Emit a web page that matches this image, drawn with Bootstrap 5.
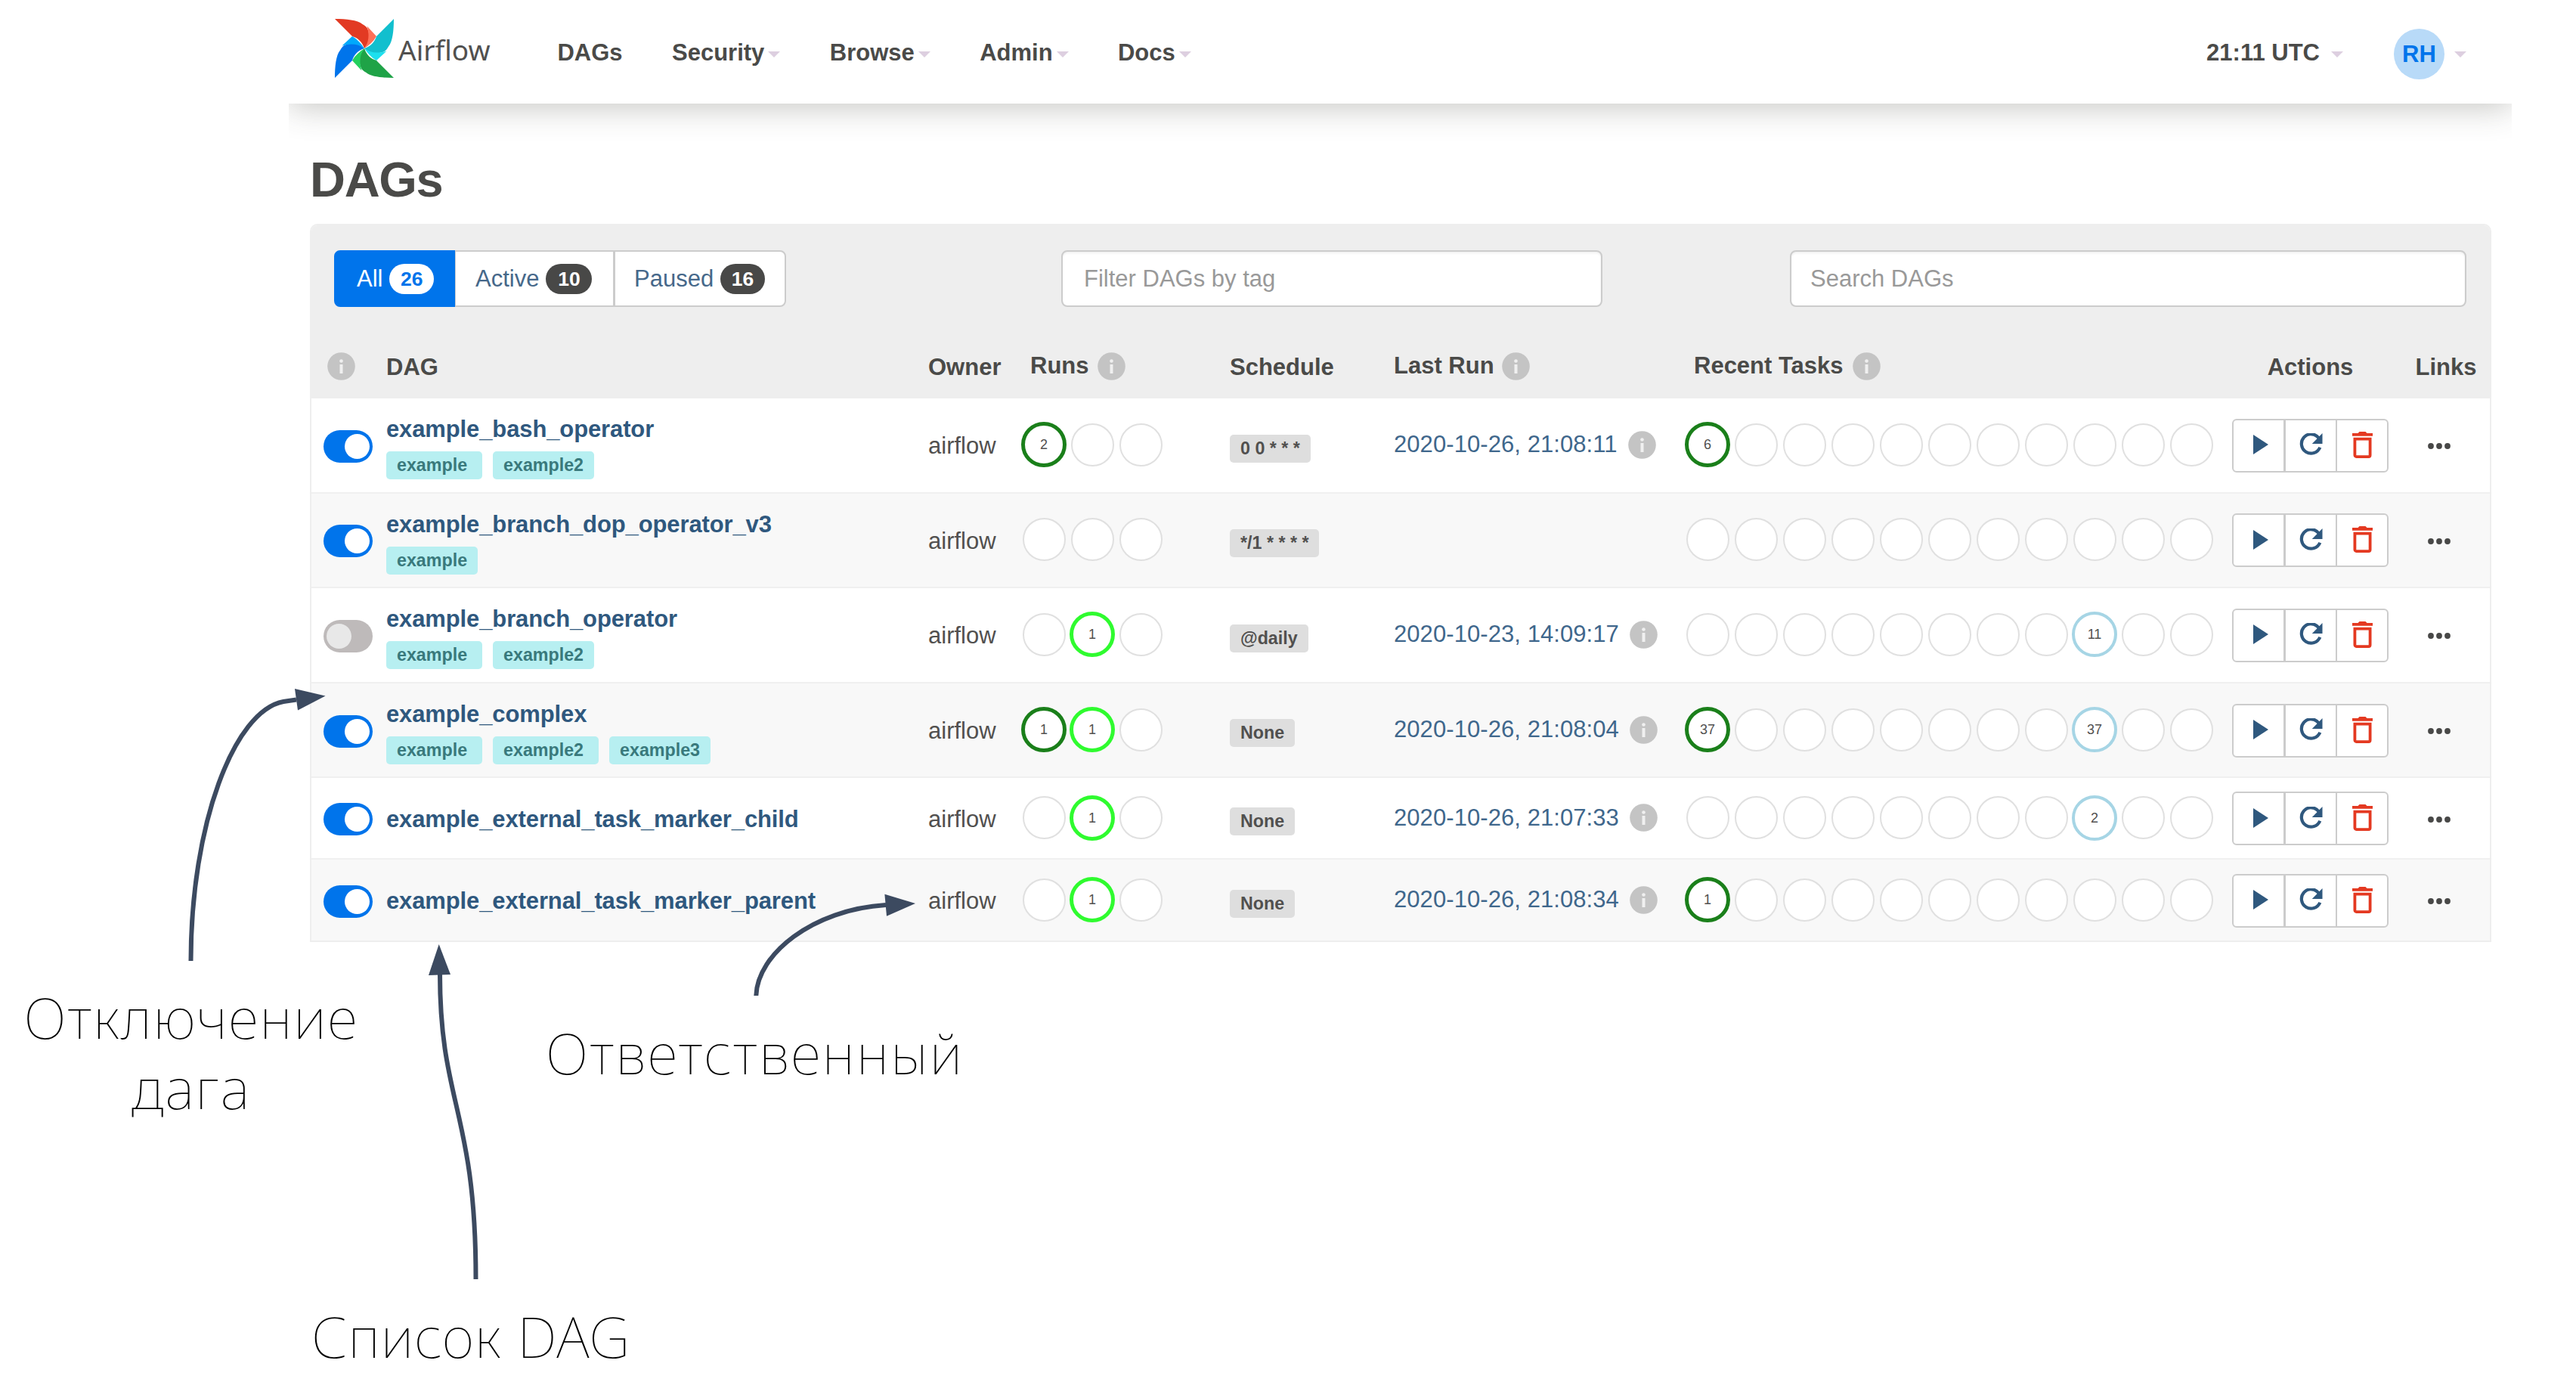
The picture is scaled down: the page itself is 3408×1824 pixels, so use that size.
<!DOCTYPE html>
<html lang="ru">
<head>
<meta charset="utf-8">
<title>Airflow – DAGs</title>
<link href="https://cdn.jsdelivr.net/npm/bootstrap@5.3.0/dist/css/bootstrap.min.css" rel="stylesheet">
<style>
body{font-family:"Liberation Sans",Arial,sans-serif;font-size:31px;line-height:44px;color:#51504f;background:#fff}
.sheet{width:3408px;height:1824px}
.app{margin-left:382px;width:2941px;height:1260px}
.topbar{height:137px;padding:0 60px;box-shadow:0 4px 40px rgba(60,60,50,.3);font-weight:700;color:#4a4a48;z-index:1}
.brand{font:400 37px/44px "Noto Sans","Open Sans",sans-serif;color:#51504f;margin:-6px 0 0 5px}
.menu-item{padding:2px 0 0;white-space:nowrap}
.caret{width:0;height:0;border:8.5px solid transparent;border-top-color:#ddcfe0;border-bottom:0;margin-left:5px;margin-top:4px}
.avatar{width:67px;height:67px;background:#b8daf8;color:#0074eb;margin-top:6px}
.page-title{font-size:65px;line-height:80px;letter-spacing:-1.3px;font-weight:700;color:#4a4a48;margin:61px 0 0 28px}
.panel{margin:18px 0 0 28px;width:2886px;border:2px solid #eee;border-radius:10px 10px 0 0}
.toolbar{background:#eee;height:147px;padding:33px 31px 0 30px;border-radius:8px 8px 0 0}
.filters .btn{height:75px;border:2px solid #ccc;background:#fff;color:#46688a;font-size:31px;line-height:44px;border-radius:8px;padding:0 26px;display:flex;align-items:center;gap:9px}
.filters .btn.active{background:#0074eb;border-color:#0074eb;color:#fff}
.filters .count{font-size:26.5px;line-height:41px;width:61px;height:40px;border-radius:20px;padding:0;background:#484847;color:#fff;display:block;top:0}
.filters .active .count{background:#fff;color:#0074eb}
.field{height:75px;border:2px solid #ccc;border-radius:8px;font-size:31px;padding:1px 28px 0;color:#555;box-shadow:inset 0 2px 3px rgba(0,0,0,.06)}
.field::placeholder{color:#999;opacity:1}
.dags{table-layout:fixed;border-collapse:separate;border-spacing:0;width:2882px;margin:0;color:#51504f}
.dags th,.dags td{padding:0;vertical-align:middle;border:0;background:transparent;box-shadow:none;color:inherit;white-space:nowrap}
.dags th{height:82px;background:#eee;color:#4a4a48;font-weight:700}
.dags td{height:125.6px;border-bottom:2px solid #f0f0f0;padding-top:3px}
.dags tr.short td{height:108px}
.dags tbody tr:nth-child(even) td{background:#f8f8f8}
.dags tbody tr:last-child td{border-bottom:0;height:107px}
.dags .raised{padding-bottom:4px}
.dags .acts-cell{padding-bottom:2px}
.dot-i{width:37px;height:37px;display:block;fill:#c4c4c4}
.name{color:#2f587e;font-weight:700;line-height:44px;letter-spacing:-.12px}
.tagrow{gap:14px;margin-top:7px}
.tag{background:#b7eff1;color:#39797c;font-weight:700;font-size:23.25px;line-height:37px;height:37px;border-radius:5px;padding:0 20px 0 14px}
.tag:last-child{padding-right:14px}
.sched{display:inline-block;vertical-align:middle;background:#dedede;color:#51504f;font-weight:700;font-size:23.25px;line-height:37px;height:37px;border-radius:5px;padding:0 14px;margin-top:2px}
.run-date{color:#3f678c;letter-spacing:.07px}
.rings{gap:4px}
.ring{width:60px;height:60px;padding:1.5px}
.ring span{display:flex;align-items:center;justify-content:center;width:100%;height:100%;border-radius:50%;border:2.5px solid #e0e0e0;background:#fff;font-size:18px;line-height:20px}
.ring.on{padding:0}
.ring.on span{border-width:5px}
.ring.success span{border-color:#1a7f1a}
.ring.running span{border-color:#2ffb2f}
.ring.none span{border-color:#a6d5e5;border-width:4px}
.acts .btn{width:70px;height:71px;border:2px solid #ccc;background:#fff;border-radius:6px;padding:0 0 2px 1px;display:flex;align-items:center;justify-content:center}
.acts .btn:first-child{padding-left:6px}
.acts .btn + .btn{margin-left:-1.500px!important}
.toggle-sw{width:65px;height:43px;border-radius:22px;background:#0074eb;padding:5px 4px;margin-left:16px;display:flex;justify-content:flex-end}
.toggle-sw i{width:33px;height:33px;border-radius:50%;background:#fff}
.toggle-sw.off{background:#bebaba;justify-content:flex-start}
.toggle-sw.off i{background:#e8e8e8}
.note{position:absolute;font-family:"Noto Sans",Roboto,sans-serif;font-weight:130;font-size:75px;line-height:93px;letter-spacing:1.8px;color:#000;white-space:nowrap;text-align:center}
.arrows{position:absolute;left:0;top:0;z-index:2}
</style>
<script src="https://cdn.jsdelivr.net/npm/bootstrap@5.3.0/dist/js/bootstrap.bundle.min.js"></script>
</head>
<body>
<svg width="0" height="0" class="position-absolute">
  <symbol id="info" viewBox="0 0 37 37"><circle cx="18.5" cy="18.5" r="18.3"/><g fill="#fff" fill-opacity=".75"><circle cx="18.5" cy="11.5" r="2.3"/><rect x="16.5" y="16" width="4" height="12"/></g></symbol>
  <symbol id="play" viewBox="0 0 20 26"><path fill="#2f587e" d="M0 0v26l20-13z"/></symbol>
  <symbol id="reload" viewBox="0 0 31 30"><path fill="none" stroke="#2f587e" stroke-width="4.2" d="M25.6 6.2A12.7 12.7 0 1 0 27.3 18.8"/><path fill="#2f587e" d="M30.5 0v14H16.8z"/></symbol>
  <symbol id="trash" viewBox="0 0 27 35"><path fill="#e43921" d="M0 2h7.500l2-2h8l2 2H27v3.800H0z"/><path fill="none" stroke="#e43921" stroke-width="3.8" d="M3.400 9.600h20.200v21.500a2 2 0 0 1-2 2H5.400a2 2 0 0 1-2-2z"/></symbol>
  <symbol id="dots" viewBox="0 0 30 8"><g fill="#484847"><circle cx="4" cy="4" r="3.9"/><circle cx="15" cy="4" r="3.9"/><circle cx="26" cy="4" r="3.9"/></g></symbol>
</svg>
<div class="sheet position-relative overflow-hidden">
  <div class="app overflow-hidden">
    <nav class="topbar d-flex align-items-center bg-white position-relative">
      <svg width="80" height="80" viewBox="0 0 80 80" style="margin-top:-9px">
        <g><path fill="#e23a23" d="M1 1C16 1 31 2.500 37.500 8C41 10 44 12 45 16C48 25 46 33 40 40C37 31 31 26 24 24Z"/><path fill="#ff7057" d="M43.500 10.500L56 24C52 31 46 36 40 40C46 32 47 22 43.500 10.500Z"/></g>
        <g transform="rotate(90 40 40)"><path fill="#12bfce" d="M1 1C16 1 31 2.500 37.500 8C41 10 44 12 45 16C48 25 46 33 40 40C37 31 31 26 24 24Z"/><path fill="#1ce0ee" d="M43.500 10.500L56 24C52 31 46 36 40 40C46 32 47 22 43.500 10.500Z"/></g>
        <g transform="rotate(180 40 40)"><path fill="#1fa347" d="M1 1C16 1 31 2.500 37.500 8C41 10 44 12 45 16C48 25 46 33 40 40C37 31 31 26 24 24Z"/><path fill="#24d05e" d="M43.500 10.500L56 24C52 31 46 36 40 40C46 32 47 22 43.500 10.500Z"/></g>
        <g transform="rotate(270 40 40)"><path fill="#0074eb" d="M1 1C16 1 31 2.500 37.500 8C41 10 44 12 45 16C48 25 46 33 40 40C37 31 31 26 24 24Z"/><path fill="#00a9fb" d="M43.500 10.500L56 24C52 31 46 36 40 40C46 32 47 22 43.500 10.500Z"/></g>
      </svg>
      <span class="brand">Airflow</span>
      <div class="d-flex" style="margin-left:89px;gap:65.4px">
        <span class="menu-item">DAGs</span>
        <span class="menu-item d-flex align-items-center">Security<i class="caret"></i></span>
        <span class="menu-item d-flex align-items-center">Browse<i class="caret"></i></span>
        <span class="menu-item d-flex align-items-center">Admin<i class="caret"></i></span>
        <span class="menu-item d-flex align-items-center">Docs<i class="caret"></i></span>
      </div>
      <span class="menu-item d-flex align-items-center ms-auto">21:11 UTC<i class="caret" style="margin-left:15px"></i></span>
      <span class="avatar rounded-circle d-flex align-items-center justify-content-center" style="margin-left:67px">RH</span>
      <i class="caret" style="margin-left:13px;margin-top:7px"></i>
    </nav>
    <h1 class="page-title">DAGs</h1>
    <section class="panel">
      <div class="toolbar d-flex">
        <div class="btn-group filters">
          <a class="btn active" style="width:160px;padding-left:28px">All <span class="count badge">26</span></a>
          <a class="btn" style="width:212px">Active <span class="count badge">10</span></a>
          <a class="btn" style="width:228px;padding-left:25px">Paused <span class="count badge">16</span></a>
        </div>
        <input class="form-control field" style="width:716px;margin-left:auto" placeholder="Filter DAGs by tag">
        <input class="form-control field" style="width:895px;margin-left:248px;padding-left:25px" placeholder="Search DAGs">
      </div>
      <table class="table dags">
        <colgroup><col style="width:99px"><col style="width:717px"><col style="width:123px"><col style="width:276px"><col style="width:217px"><col style="width:385px"><col style="width:724px"><col style="width:207px"><col style="width:134px"></colgroup>
        <thead><tr>
          <th class="raised"><svg class="dot-i" style="margin-left:21px"><use href="#info"/></svg></th>
          <th>DAG</th>
          <th>Owner</th>
          <th class="raised"><div class="d-flex align-items-center" style="gap:11px;padding-left:12px">Runs <svg class="dot-i"><use href="#info"/></svg></div></th>
          <th>Schedule</th>
          <th class="raised"><div class="d-flex align-items-center" style="gap:10px">Last Run <svg class="dot-i"><use href="#info"/></svg></div></th>
          <th class="raised"><div class="d-flex align-items-center" style="gap:12px;padding-left:12px">Recent Tasks <svg class="dot-i"><use href="#info"/></svg></div></th>
          <th class="text-center">Actions</th>
          <th class="text-center" style="padding-left:18px">Links</th>
        </tr></thead>
        <tbody id="rows"></tbody>
      </table>
    </section>
  </div>

  <svg class="arrows" width="3408" height="1824" viewBox="0 0 3408 1824">
    <g fill="none" stroke="#3c4a60" stroke-width="6">
      <path d="M252.500 1271C252.500 1090 310 940 375 928L392 925.500"/>
      <path d="M629.500 1692C629.500 1470 582 1460 582 1288"/>
      <path d="M1000.300 1317C1002 1262 1075 1203 1172 1197"/>
    </g>
    <g fill="#3c4a60">
      <path d="M430.500 920.500L390 911L394 939.500Z"/>
      <path d="M580.700 1249L567 1290L596 1289Z"/>
      <path d="M1211 1195L1170.400 1182.700L1173 1211.700Z"/>
    </g>
  </svg>
  <div class="note" style="left:30px;top:1299px;width:446px">Отключение<br>дага</div>
  <div class="note" style="left:722px;top:1346px;letter-spacing:2.3px">Ответственный</div>
  <div class="note" style="left:412px;top:1721px;letter-spacing:1.2px">Список DAG</div>
</div>
<script>
// name, tags, enabled, {run slot: [class, count]}, schedule, last run, {task slot: [class, count]}
const dags = [
  ["example_bash_operator", ["example","example2"], 1, {0:["success",2]}, "0 0 * * *", "2020-10-26, 21:08:11", {0:["success",6]}],
  ["example_branch_dop_operator_v3", ["example"], 1, {}, "*/1 * * * *", "", {}],
  ["example_branch_operator", ["example","example2"], 0, {1:["running",1]}, "@daily", "2020-10-23, 14:09:17", {8:["none",11]}],
  ["example_complex", ["example","example2","example3"], 1, {0:["success",1],1:["running",1]}, "None", "2020-10-26, 21:08:04", {0:["success",37],8:["none",37]}],
  ["example_external_task_marker_child", [], 1, {1:["running",1]}, "None", "2020-10-26, 21:07:33", {8:["none",2]}],
  ["example_external_task_marker_parent", [], 1, {1:["running",1]}, "None", "2020-10-26, 21:08:34", {0:["success",1]}]
];
const rings = (n, set) => '<div class="rings d-flex">' + Array.from({length:n}, (_, i) =>
  set[i] ? `<div class="ring on ${set[i][0]}"><span>${set[i][1]}</span></div>` : '<div class="ring"><span></span></div>').join('') + '</div>';
const icon = (id, w, h) => `<svg width="${w}" height="${h}"><use href="#${id}"/></svg>`;
document.getElementById('rows').innerHTML = dags.map(d => `<tr class="${d[1].length ? '' : 'short'}">
  <td><div class="toggle-sw ${d[2] ? '' : 'off'}"><i></i></div></td>
  <td><div class="name">${d[0]}</div>${d[1].length ? '<div class="tagrow d-flex">' + d[1].map(t => `<span class="tag">${t}</span>`).join('') + '</div>' : ''}</td>
  <td>airflow</td>
  <td class="raised">${rings(3, d[3])}</td>
  <td><span class="sched">${d[4]}</span></td>
  <td class="raised">${d[5] ? `<div class="d-flex align-items-center run-date" style="gap:14px">${d[5]}<svg class="dot-i"><use href="#info"/></svg></div>` : ''}</td>
  <td class="raised">${rings(11, d[6])}</td>
  <td class="acts-cell"><div class="btn-group acts">${['play,20,26','reload,31,30','trash,27,35'].map(s => `<a class="btn">${icon(...s.split(','))}</a>`).join('')}</div></td>
  <td class="text-center"><div class="d-flex justify-content-center">${icon('dots',30,8)}</div></td>
</tr>`).join('');
</script>
</body>
</html>
